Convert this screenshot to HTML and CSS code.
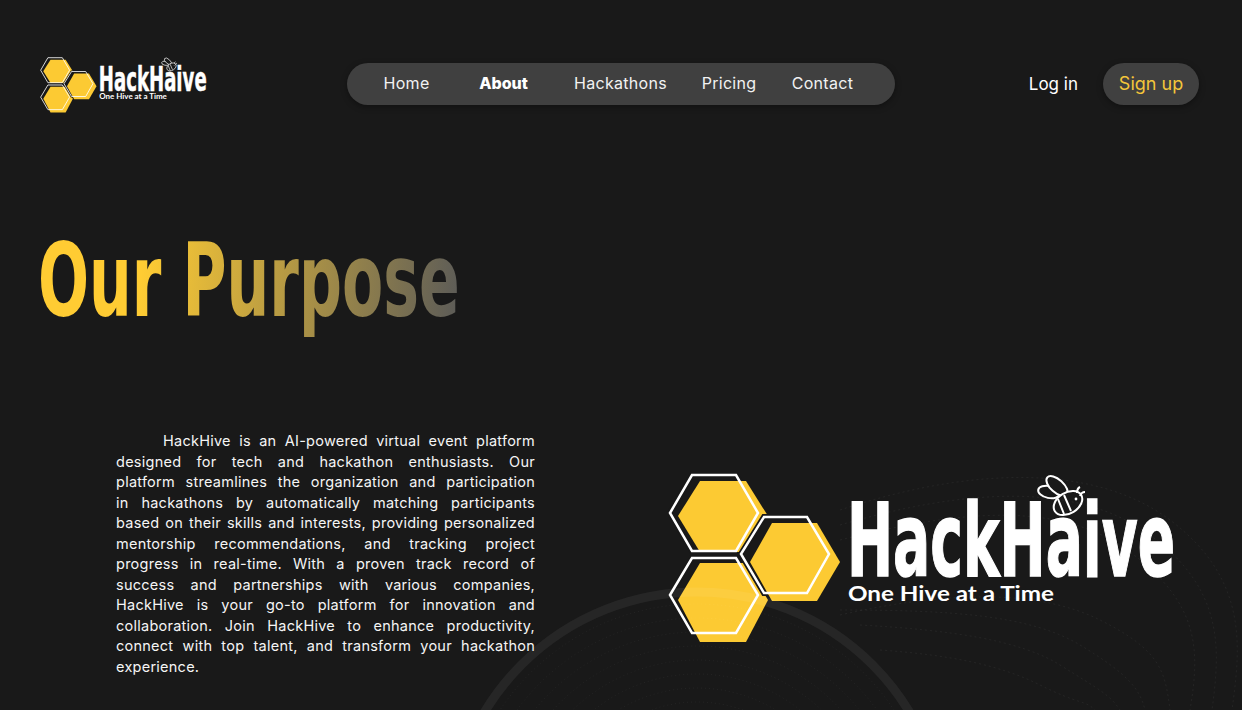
FILE: index.html
```html
<!DOCTYPE html>
<html lang="en">
<head>
<meta charset="utf-8">
<title>HackHive - About</title>
<link rel="stylesheet" href="styles.css">
</head>
<body>
<svg class="defs" width="0" height="0" aria-hidden="true">
  <symbol id="hive-logo" viewBox="668 473 508 170">
    <polygon class="hex-back" points="670,513 692,475 736,475 758,513 736,551 692,551"/>
    <polygon class="hex-fill" points="678,516 700,481 746,481 768,516 746,552 700,552"/>
    <polygon class="hex-line" points="670,513 692,475 736,475 758,513 736,551 692,551"/>
    <polygon class="hex-back" points="670,595 692,558 736,558 758,595 736,633 692,633"/>
    <polygon class="hex-fill" points="678,600 700,563 746,563 768,600 746,642 700,642"/>
    <polygon class="hex-line" points="670,595 692,558 736,558 758,595 736,633 692,633"/>
    <polygon class="hex-back" points="741,554 764,517 807,517 829,554 807,593 764,593"/>
    <polygon class="hex-fill" points="750,562 772,523 817,523 840,562 817,601 772,601"/>
    <polygon class="hex-line" points="741,554 764,517 807,517 829,554 807,593 764,593"/>
    <text class="logo-word" x="847" y="576" textLength="328" lengthAdjust="spacingAndGlyphs">HackHaive</text>
    <text class="logo-tag" x="848" y="601" textLength="206" lengthAdjust="spacingAndGlyphs">One Hive at a Time</text>
    <g class="bee">
      <ellipse cx="1049" cy="492" rx="11" ry="6" transform="rotate(12 1049 492)"/>
      <ellipse cx="1057" cy="486" rx="13" ry="6.5" transform="rotate(42 1057 486)"/>
      <ellipse class="bee-body" cx="1068" cy="503" rx="15.5" ry="10.5" transform="rotate(-32 1068 503)"/>
      <path d="M1058 499l6 15M1064 495l7 16"/>
      <path d="M1077 493c0-3 1-5 3-6M1080 496c1-3 3-4 5-4"/>
      <circle class="bee-eye" cx="1076" cy="499" r="1.4"/>
    </g>
  </symbol>
</svg>

<div class="page">
  <header class="topbar">
    <a class="brand" href="#" aria-label="HackHive"><svg class="brand-logo"><use href="#hive-logo"/></svg></a>
    <nav class="mainnav">
      <a href="#">Home</a>
      <a class="active" href="#">About</a>
      <a href="#">Hackathons</a>
      <a href="#">Pricing</a>
      <a href="#">Contact</a>
    </nav>
    <div class="auth">
      <a class="login" href="#">Log in</a>
      <a class="signup" href="#">Sign up</a>
    </div>
  </header>

  <h1 class="title">Our Purpose</h1>

  <section class="about">
    <p class="copy">
      <span class="ln first">HackHive is an AI-powered virtual event platform</span>
      <span class="ln">designed for tech and hackathon enthusiasts. Our</span>
      <span class="ln">platform streamlines the organization and participation</span>
      <span class="ln">in hackathons by automatically matching participants</span>
      <span class="ln">based on their skills and interests, providing personalized</span>
      <span class="ln">mentorship recommendations, and tracking project</span>
      <span class="ln">progress in real-time. With a proven track record of</span>
      <span class="ln">success and partnerships with various companies,</span>
      <span class="ln">HackHive is your go-to platform for innovation and</span>
      <span class="ln">collaboration. Join HackHive to enhance productivity,</span>
      <span class="ln">connect with top talent, and transform your hackathon</span>
      <span class="end">experience.</span>
    </p>
    <svg class="about-logo" role="img" aria-label="HackHaive, One Hive at a Time"><use href="#hive-logo"/></svg>
  </section>

  <svg class="backdrop" viewBox="0 0 1242 710" aria-hidden="true">
    <g class="rings">
      <circle cx="697" cy="840" r="236"/><circle cx="697" cy="840" r="222"/>
      <circle cx="697" cy="840" r="208"/><circle cx="697" cy="840" r="194"/>
      <circle cx="697" cy="840" r="180"/><circle cx="697" cy="840" r="166"/>
      <circle cx="697" cy="840" r="152"/><circle cx="697" cy="840" r="138"/>
    </g>
    <circle class="halo" cx="697" cy="840" r="248"/>
    <g class="fans">
      <path d="M840 510C960 470 1090 460 1170 520S1240 650 1232 710"/>
      <path d="M840 525C960 490 1075 480 1150 535S1220 650 1212 710"/>
      <path d="M840 540C960 510 1060 500 1130 552S1200 650 1190 710"/>
      <path d="M840 615C950 590 1040 590 1100 620S1165 670 1170 710"/>
      <path d="M840 610C950 610 1030 615 1080 645S1140 690 1145 710"/>
      <path d="M860 625C950 630 1020 640 1060 665S1110 695 1120 710"/>
      <path d="M880 650C950 655 1000 665 1040 685S1085 700 1095 710"/>
    </g>
  </svg>
</div>
</body>
</html>
```

FILE: styles.css
```css
* { box-sizing: border-box; }

html, body { margin: 0; padding: 0; background: #191919; }

body {
  font-family: Inter, "Noto Sans", "Liberation Sans", sans-serif;
  color: #fff;
}

a { color: inherit; text-decoration: none; }

.defs { position: absolute; }

.page {
  position: relative;
  width: 1242px;
  height: 710px;
  overflow: hidden;
  padding: 57px 43px 0 40px;
  background: #191919;
}

.topbar {
  display: flex;
  align-items: center;
  justify-content: space-between;
  height: 55px;
}

.brand { display: block; width: 172px; height: 56px; }
.brand-logo { display: block; width: 167px; height: 56px; }

.mainnav {
  display: grid;
  grid-template-columns: 83px 111px 123px 94px 93px;
  align-items: center;
  width: 548px;
  height: 42px;
  margin-top: -1px;
  padding: 0 0 2px 18px;
  border-radius: 21px;
  background: #404040;
  box-shadow: 0 2px 6px rgba(0, 0, 0, .35);
  font-size: 16px;
  letter-spacing: .3px;
  text-align: center;
  color: #f2f2f2;
}

.mainnav .active { font-weight: 800; color: #fff; letter-spacing: 0; }

.auth {
  display: flex;
  align-items: center;
  justify-content: flex-end;
  gap: 25px;
  width: 169px;
  margin-top: -1px;
  font-size: 18px;
}

.login { white-space: nowrap; flex: none; font-size: 17px; }

.signup {
  flex: none;
  display: flex;
  align-items: center;
  justify-content: center;
  width: 96px;
  height: 42px;
  padding-bottom: 1px;
  border-radius: 21px;
  background: #404040;
  box-shadow: 0 2px 6px rgba(0, 0, 0, .35);
  color: #f4c63a;
  white-space: nowrap;
}

.title {
  width: max-content;
  margin: 110px 0 0 -2px;
  font-family: "DejaVu Sans", "Liberation Sans", sans-serif;
  font-size: 101px;
  line-height: 118px;
  font-weight: 700;
  white-space: nowrap;
  background: linear-gradient(100deg, #ffcc33 25%, #5a5a58 100%);
  -webkit-background-clip: text;
  background-clip: text;
  color: transparent;
  transform: scaleX(.595);
  transform-origin: left center;
}

.about {
  display: flex;
  align-items: flex-start;
  margin-top: 91px;
  padding-left: 76px;
}

.copy {
  flex: none;
  width: 419px;
  margin: 0;
  font-size: 14.5px;
  letter-spacing: .25px;
  line-height: 20.5px;
  color: #f5f5f5;
}

.ln, .end { display: block; white-space: nowrap; }
.ln { text-align: justify; text-align-last: justify; white-space: normal; }
.first { padding-left: 47px; }

.about-logo {
  flex: none;
  display: block;
  width: 508px;
  height: 170px;
  margin: 42px 0 0 133px;
}

.backdrop {
  position: absolute;
  inset: 0;
  width: 1242px;
  height: 710px;
  pointer-events: none;
}

.rings circle {
  fill: none;
  stroke: #fff;
  stroke-opacity: .05;
  stroke-dasharray: 1 3;
}

.halo {
  fill: none;
  stroke: #fff;
  stroke-opacity: .06;
  stroke-width: 9;
}

.fans path {
  fill: none;
  stroke: #fff;
  stroke-opacity: .05;
  stroke-dasharray: 2 3;
}

.hex-back { fill: #191919; stroke: #191919; stroke-width: 6; }
.hex-fill { fill: #fcca33; }
.hex-line { fill: none; stroke: #fff; stroke-width: 2.5; }

.logo-word {
  font-family: "DejaVu Sans", "Liberation Sans", sans-serif;
  font-size: 101px;
  font-weight: 700;
  fill: #fff;
  stroke: #fff;
  stroke-width: 1.5;
}

.logo-tag {
  font-family: Lato, Inter, sans-serif;
  font-size: 21px;
  font-weight: 700;
  fill: #fff;
}

.bee ellipse, .bee path { fill: #191919; stroke: #fff; stroke-width: 2; }
.bee path { fill: none; }
.bee-eye { fill: #fff; }
```
